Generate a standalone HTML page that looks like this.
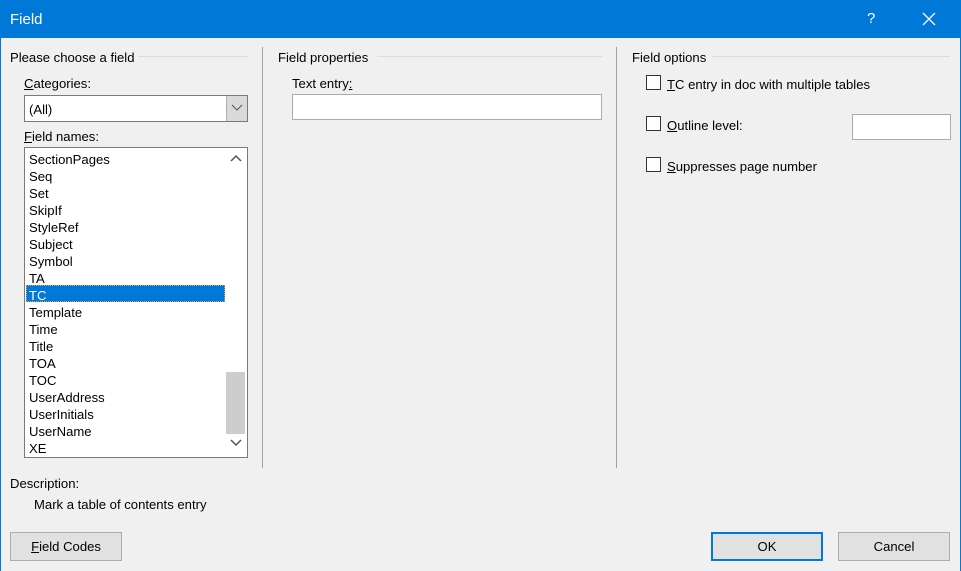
<!DOCTYPE html>
<html><head><meta charset="utf-8"><style>
*{margin:0;padding:0;box-sizing:border-box}
body{width:961px;height:571px;overflow:hidden;background:#f0f0f0;font-family:"Liberation Sans",sans-serif;font-size:13.1px;color:#000;position:relative}
.a{position:absolute;white-space:nowrap}
.t{line-height:15px}
u{text-decoration:underline}
.box{position:absolute;background:#fff;border:1px solid #7a7a7a}
.cb{position:absolute;width:15px;height:15px;border:1px solid #333;background:#fff}
.btn{position:absolute;background:#e1e1e1;border:1px solid #adadad;text-align:center;line-height:28px}
.ln{position:absolute;height:1px;background:#dcdcdc}
.vl{position:absolute;width:1px;background:#a0a0a0}
</style></head><body>
<div class="a" style="left:0;top:0;width:961px;height:38px;background:#0078d7"></div>
<div class="a" style="left:0;top:0;width:1px;height:571px;background:#0078d7"></div>
<div class="a" style="left:960px;top:0;width:1px;height:571px;background:#0078d7"></div>
<div class="a" style="left:10px;top:11px;color:#fff;font-size:15px">Field</div>
<div class="a" style="left:867px;top:10px;color:#fff;font-size:15px">?</div>
<svg class="a" style="left:922px;top:12px" width="14" height="14"><path d="M1 1L13 13M13 1L1 13" stroke="#fff" stroke-width="1.3"/></svg>

<div class="a t" style="left:10px;top:50px">Please choose a field</div>
<div class="ln" style="left:138px;top:56px;width:110px"></div>
<div class="a t" style="left:278px;top:50px">Field properties</div>
<div class="ln" style="left:377px;top:56px;width:225px"></div>
<div class="a t" style="left:632px;top:50px">Field options</div>
<div class="ln" style="left:712px;top:56px;width:238px"></div>
<div class="vl" style="left:262px;top:47px;height:421px"></div>
<div class="vl" style="left:616px;top:47px;height:421px"></div>

<div class="a t" style="left:24px;top:76px"><u>C</u>ategories:</div>
<div class="box" style="left:24px;top:95px;width:224px;height:27px"></div>
<div class="a t" style="left:29px;top:102px">(All)</div>
<div class="a" style="left:226px;top:96px;width:21px;height:25px;background:#dadada;border-left:1px solid #acacac"></div>
<svg class="a" style="left:231px;top:104px" width="12" height="8"><path d="M1 1L6 6L11 1" stroke="#555" fill="none"/></svg>

<div class="a t" style="left:24px;top:129px"><u>F</u>ield names:</div>
<div class="box" style="left:24px;top:147px;width:224px;height:311px"></div>
<div class="a" style="left:26px;top:285px;width:199px;height:17px;background:#0078d7;border:1px dotted #e0a060"></div>
<div class="a" style="left:226px;top:372px;width:19px;height:62px;background:#cdcdcd"></div>
<svg class="a" style="left:230px;top:154px" width="12" height="8"><path d="M1 7L6 2L11 7" stroke="#555" stroke-width="1.5" fill="none"/></svg>
<svg class="a" style="left:230px;top:439px" width="12" height="8"><path d="M1 1L6 6L11 1" stroke="#555" stroke-width="1.5" fill="none"/></svg>
<div class="a" style="left:29px;top:151px;line-height:17px">SectionPages<br>Seq<br>Set<br>SkipIf<br>StyleRef<br>Subject<br>Symbol<br>TA<br><span style="color:#fff">TC</span><br>Template<br>Time<br>Title<br>TOA<br>TOC<br>UserAddress<br>UserInitials<br>UserName<br>XE</div>

<div class="a t" style="left:292px;top:76px">Text entry<u>:</u></div>
<div class="box" style="left:292px;top:94px;width:310px;height:26px;border-color:#ababab"></div>

<div class="cb" style="left:646px;top:75px"></div>
<div class="a t" style="left:667px;top:77px"><u>T</u>C entry in doc with multiple tables</div>
<div class="cb" style="left:646px;top:116px"></div>
<div class="a t" style="left:667px;top:118px"><u>O</u>utline level:</div>
<div class="box" style="left:852px;top:114px;width:99px;height:26px;border-color:#ababab"></div>
<div class="cb" style="left:646px;top:157px"></div>
<div class="a t" style="left:667px;top:159px"><u>S</u>uppresses page number</div>

<div class="a t" style="left:10px;top:476px">Description:</div>
<div class="a t" style="left:34px;top:497px">Mark a table of contents entry</div>

<div class="btn" style="left:10px;top:532px;width:112px;height:29px"><u>F</u>ield Codes</div>
<div class="btn" style="left:711px;top:532px;width:112px;height:29px;border:2px solid #0078d7;line-height:26px">OK</div>
<div class="btn" style="left:838px;top:532px;width:112px;height:29px">Cancel</div>
</body></html>
